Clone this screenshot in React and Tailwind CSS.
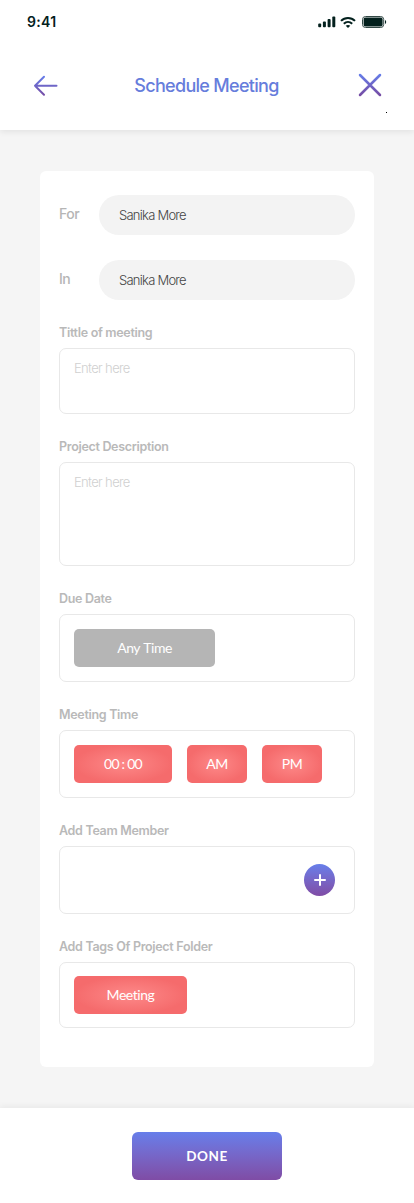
import React from "react";

function StatusBar() {
  return (
    <div className="flex h-[44px] items-center justify-between pl-[27px] pr-[27px]">
      <span className="text-[14px] leading-4 font-semibold tracking-[0.35px] text-[#04201d]">9:41</span>
      <div className="flex items-center text-[#03201d]">
        <svg width="18" height="12" viewBox="0 0 18 12" fill="currentColor">
          <rect x="0.2" y="7.6" width="3" height="3.6" rx="0.9" />
          <rect x="4.9" y="5.5" width="3" height="5.7" rx="0.9" />
          <rect x="9.6" y="3" width="3" height="8.2" rx="0.9" />
          <rect x="14.3" y="0.6" width="3" height="10.6" rx="0.9" />
        </svg>
        <svg width="16" height="12" viewBox="0 0 16 12" className="ml-[4px]" fill="none" stroke="currentColor" strokeWidth="2">
          <path d="M1 4.9C5 .9 11 .9 15 4.900" />
          <path d="M3.8 7.7c2.5-2.4 5.900-2.400 8.400 0" />
          <path d="M5.700 9.800c1.300-1.100 3.300-1.100 4.600 0L8 12z" fill="currentColor" stroke="none" />
        </svg>
        <svg width="25" height="12" viewBox="0 0 25 12" className="ml-[6px]">
          <rect x="0.5" y="0.5" width="21.2" height="11" rx="3" fill="none" stroke="#334946" />
          <rect x="1.6" y="1.600" width="19" height="8.800" rx="1.900" fill="#03201d" />
          <path d="M23 4v4c1.600-.7 1.600-3.300 0-4z" fill="#03201d" />
        </svg>
      </div>
    </div>
  );
}

function Header() {
  return (
    <header className="relative z-10 h-[130px] bg-white shadow-[0_2px_6px_rgba(0,0,0,0.08)]">
      <StatusBar />
      <div className="flex h-[83px] items-center justify-between pl-[33px] pr-[32px]">
        <button aria-label="Back">
          <svg width="25" height="22" viewBox="0 0 25 22" fill="none" stroke="url(#arrowFade)" strokeWidth="2" strokeLinecap="round" strokeLinejoin="round">
            <defs>
              <linearGradient id="arrowFade" gradientUnits="userSpaceOnUse" x1="0" y1="1" x2="0" y2="21">
                <stop stopColor="#667eea" />
                <stop offset="1" stopColor="#764ba2" />
              </linearGradient>
            </defs>
            <path d="M11 1.700 2 10.700l9 9M2 10.700h21.500" />
          </svg>
        </button>
        <h1 className="-ml-[3px] text-[18px] leading-6 font-medium tracking-[-0.7px] text-[#667ddc]">Schedule Meeting</h1>
        <button aria-label="Close" className="-mt-px">
          <svg width="24" height="24" viewBox="0 0 24 24" fill="none" stroke="url(#closeFade)" strokeWidth="2.500" strokeLinecap="round">
            <defs>
              <linearGradient id="closeFade" gradientUnits="userSpaceOnUse" x1="0" y1="1" x2="0" y2="23">
                <stop stopColor="#667eea" />
                <stop offset="1" stopColor="#764ba2" />
              </linearGradient>
            </defs>
            <path d="M2 2l20 20M22 2 2 22" />
          </svg>
        </button>
      </div>
      <span className="absolute left-[386px] top-[112px] size-px bg-black" />
    </header>
  );
}

function PillRow({ label, value }) {
  return (
    <div className="flex h-10">
      <span className="w-10 pt-[10px] text-[14px] leading-[18px] font-medium tracking-[-0.5px] text-[#b5b5b5]">{label}</span>
      <div className="flex flex-1 items-center rounded-full bg-[#f3f3f3] pl-5 pt-px text-[13px] font-[350] tracking-[-0.75px] text-[#444]">{value}</div>
    </div>
  );
}

function Field({ label, box, children }) {
  return (
    <section>
      <h2 className="flex h-12 items-end pb-[7px] text-[12.5px] leading-4 font-semibold tracking-[-0.31px] text-[#b9b9b9]">{label}</h2>
      <div className={"flex rounded-[7px] border border-[#e8e8e8] px-[14px] " + box}>{children}</div>
    </section>
  );
}

function Placeholder() {
  return <span className="pt-[11px] text-[13px] leading-4 font-light tracking-[-0.65px] text-[#d0d0d0]">Enter here</span>;
}

function Chip({ className, children }) {
  return (
    <button className={"flex h-[38px] items-center justify-center rounded-[5px] pb-px font-['Lato',sans-serif] text-[14px] tracking-[-0.45px] text-white " + className}>
      {children}
    </button>
  );
}

const coral = "bg-[radial-gradient(ellipse_closest-side,#fd8989,#f56b6c)] ";

export default function App() {
  return (
    <div className="flex h-[1203px] w-[414px] flex-col overflow-hidden bg-[#f5f5f5] font-['Inter',sans-serif]">
      <Header />
      <main className="flex-1 px-10 pt-[41px]">
        <div className="h-[896px] rounded-[6px] bg-white px-[19px] pt-6">
          <div className="flex flex-col gap-[25px]">
            <PillRow label="For" value="Sanika More" />
            <PillRow label="In" value="Sanika More" />
          </div>
          <Field label="Tittle of meeting" box="h-[66px]">
            <Placeholder />
          </Field>
          <Field label="Project Description" box="h-[104px]">
            <Placeholder />
          </Field>
          <Field label="Due Date" box="h-[68px] items-center">
            <Chip className="w-[141px] bg-[#b5b5b5]">
              <span className="tracking-[-0.5px] [word-spacing:1px]">Any Time</span>
            </Chip>
          </Field>
          <Field label="Meeting Time" box="h-[68px] items-center gap-[15px]">
            <Chip className={coral + "w-[98px]"}>
              <span className="tracking-[-0.75px]">00 : 00</span>
            </Chip>
            <Chip className={coral + "w-[60px]"}>AM</Chip>
            <Chip className={coral + "w-[60px]"}>PM</Chip>
          </Field>
          <Field label="Add Team Member" box="h-[68px] items-center justify-end">
            <button aria-label="Add member" className="mr-[5px] flex h-8 w-[31px] items-center justify-center rounded-[50%] bg-linear-to-b from-[#667eea] to-[#7f4ca5]">
              <svg width="12" height="12" viewBox="0 0 12 12" fill="none" stroke="white" strokeWidth="2" strokeLinecap="round">
                <path d="M6 1v10M1 6h10" />
              </svg>
            </button>
          </Field>
          <Field label="Add Tags Of Project Folder" box="h-[66px] items-center">
            <Chip className={coral + "w-[113px]"}>Meeting</Chip>
          </Field>
        </div>
      </main>
      <footer className="flex h-[95px] justify-center bg-white pt-6 shadow-[0_-2px_6px_rgba(0,0,0,0.05)]">
        <button className="flex h-12 w-[150px] items-center justify-center rounded-[6px] bg-linear-to-b from-[#667eea] to-[#7f4ca5] pt-px font-['Lato',sans-serif] text-[13.5px] font-bold tracking-[0.5px] text-white">
          DONE
        </button>
      </footer>
    </div>
  );
}
